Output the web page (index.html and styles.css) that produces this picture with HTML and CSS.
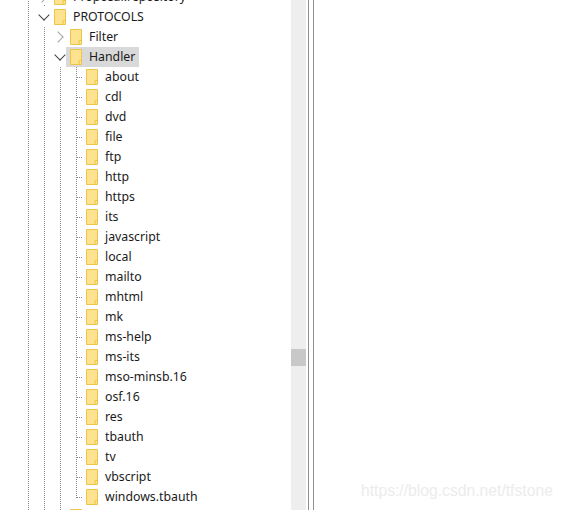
FILE: index.html
```html
<!DOCTYPE html>
<html lang="en">
    <head>
        <meta charset="UTF-8">
        <meta name="viewport" content="width=device-width, initial-scale=1.0">
        <title>regedit</title>
        <link rel="stylesheet" href="styles.css">
    </head>
    <body>
        <svg class="defs" width="0" height="0">
            <symbol id="folder" viewBox="0 0 12 16">
                <path d="M.5.5h11v15H.5z" fill="#fde38f" stroke="#eec548"/>
                <path d="M9 15.5v-4h2.5" fill="none" stroke="#eec548"/>
            </symbol>
        </svg>
        <div class="window">
            <div class="tree">
                <div class="row"><span class="cell line"></span><span class="toggle closed tail"></span><span class="item"><svg class="folder"><use href="#folder"/></svg><span>Proposal.repository</span></span></div>
                <div class="row"><span class="cell line"></span><span class="toggle open"></span><span class="item"><svg class="folder"><use href="#folder"/></svg><span>PROTOCOLS</span></span></div>
                <div class="row"><span class="cell line"></span><span class="cell line"></span><span class="toggle closed"></span><span class="item"><svg class="folder"><use href="#folder"/></svg><span>Filter</span></span></div>
                <div class="row"><span class="cell line"></span><span class="cell line"></span><span class="toggle open"></span><span class="item selected"><svg class="folder"><use href="#folder"/></svg><span>Handler</span></span></div>
                <div class="row"><span class="cell line"></span><span class="cell line"></span><span class="cell line"></span><span class="cell branch"></span><span class="item"><svg class="folder"><use href="#folder"/></svg><span>about</span></span></div>
                <div class="row"><span class="cell line"></span><span class="cell line"></span><span class="cell line"></span><span class="cell branch"></span><span class="item"><svg class="folder"><use href="#folder"/></svg><span>cdl</span></span></div>
                <div class="row"><span class="cell line"></span><span class="cell line"></span><span class="cell line"></span><span class="cell branch"></span><span class="item"><svg class="folder"><use href="#folder"/></svg><span>dvd</span></span></div>
                <div class="row"><span class="cell line"></span><span class="cell line"></span><span class="cell line"></span><span class="cell branch"></span><span class="item"><svg class="folder"><use href="#folder"/></svg><span>file</span></span></div>
                <div class="row"><span class="cell line"></span><span class="cell line"></span><span class="cell line"></span><span class="cell branch"></span><span class="item"><svg class="folder"><use href="#folder"/></svg><span>ftp</span></span></div>
                <div class="row"><span class="cell line"></span><span class="cell line"></span><span class="cell line"></span><span class="cell branch"></span><span class="item"><svg class="folder"><use href="#folder"/></svg><span>http</span></span></div>
                <div class="row"><span class="cell line"></span><span class="cell line"></span><span class="cell line"></span><span class="cell branch"></span><span class="item"><svg class="folder"><use href="#folder"/></svg><span>https</span></span></div>
                <div class="row"><span class="cell line"></span><span class="cell line"></span><span class="cell line"></span><span class="cell branch"></span><span class="item"><svg class="folder"><use href="#folder"/></svg><span>its</span></span></div>
                <div class="row"><span class="cell line"></span><span class="cell line"></span><span class="cell line"></span><span class="cell branch"></span><span class="item"><svg class="folder"><use href="#folder"/></svg><span>javascript</span></span></div>
                <div class="row"><span class="cell line"></span><span class="cell line"></span><span class="cell line"></span><span class="cell branch"></span><span class="item"><svg class="folder"><use href="#folder"/></svg><span>local</span></span></div>
                <div class="row"><span class="cell line"></span><span class="cell line"></span><span class="cell line"></span><span class="cell branch"></span><span class="item"><svg class="folder"><use href="#folder"/></svg><span>mailto</span></span></div>
                <div class="row"><span class="cell line"></span><span class="cell line"></span><span class="cell line"></span><span class="cell branch"></span><span class="item"><svg class="folder"><use href="#folder"/></svg><span>mhtml</span></span></div>
                <div class="row"><span class="cell line"></span><span class="cell line"></span><span class="cell line"></span><span class="cell branch"></span><span class="item"><svg class="folder"><use href="#folder"/></svg><span>mk</span></span></div>
                <div class="row"><span class="cell line"></span><span class="cell line"></span><span class="cell line"></span><span class="cell branch"></span><span class="item"><svg class="folder"><use href="#folder"/></svg><span>ms-help</span></span></div>
                <div class="row"><span class="cell line"></span><span class="cell line"></span><span class="cell line"></span><span class="cell branch"></span><span class="item"><svg class="folder"><use href="#folder"/></svg><span>ms-its</span></span></div>
                <div class="row"><span class="cell line"></span><span class="cell line"></span><span class="cell line"></span><span class="cell branch"></span><span class="item"><svg class="folder"><use href="#folder"/></svg><span>mso-minsb.16</span></span></div>
                <div class="row"><span class="cell line"></span><span class="cell line"></span><span class="cell line"></span><span class="cell branch"></span><span class="item"><svg class="folder"><use href="#folder"/></svg><span>osf.16</span></span></div>
                <div class="row"><span class="cell line"></span><span class="cell line"></span><span class="cell line"></span><span class="cell branch"></span><span class="item"><svg class="folder"><use href="#folder"/></svg><span>res</span></span></div>
                <div class="row"><span class="cell line"></span><span class="cell line"></span><span class="cell line"></span><span class="cell branch"></span><span class="item"><svg class="folder"><use href="#folder"/></svg><span>tbauth</span></span></div>
                <div class="row"><span class="cell line"></span><span class="cell line"></span><span class="cell line"></span><span class="cell branch"></span><span class="item"><svg class="folder"><use href="#folder"/></svg><span>tv</span></span></div>
                <div class="row"><span class="cell line"></span><span class="cell line"></span><span class="cell line"></span><span class="cell branch"></span><span class="item"><svg class="folder"><use href="#folder"/></svg><span>vbscript</span></span></div>
                <div class="row"><span class="cell line"></span><span class="cell line"></span><span class="cell line"></span><span class="cell end"></span><span class="item"><svg class="folder"><use href="#folder"/></svg><span>windows.tbauth</span></span></div>
                <div class="row"><span class="cell line"></span><span class="cell line"></span><span class="cell line"></span><span class="item"><svg class="folder"><use href="#folder"/></svg></span></div>
            </div>
            <div class="scrollbar"><div class="thumb"></div></div>
            <div class="splitter"></div>
            <div class="pane"></div>
        </div>
        <div class="watermark">https://blog.csdn.net/tfstone</div>
    </body>
</html>
```

FILE: styles.css
```css
* {
    box-sizing: border-box;
}
body {
    margin: 0;
    background: #fff;
    font-family: "Noto Sans", sans-serif;
    font-size: 12.3px;
    color: #1a1a1a;
}
.defs {
    display: block;
}
.window {
    display: flex;
    height: 510px;
    overflow: hidden;
}
.tree {
    width: 291px;
    padding-left: 20px;
    margin-top: -13px;
}
.row {
    display: flex;
    height: 20px;
    align-items: center;
}
.cell {
    width: 16px;
    height: 20px;
    flex: none;
}
.line {
    background: repeating-linear-gradient(#8a8a8a 0 1px, transparent 1px 2px) 8px 0 / 1px 100% no-repeat;
}
.branch {
    background:
        repeating-linear-gradient(#8a8a8a 0 1px, transparent 1px 2px) 8px 0 / 1px 100% no-repeat,
        repeating-linear-gradient(90deg, #8a8a8a 0 1px, transparent 1px 2px) 9px 10px / 6px 1px no-repeat;
}
.end {
    background:
        repeating-linear-gradient(#8a8a8a 0 1px, transparent 1px 2px) 8px 0 / 1px 11px no-repeat,
        repeating-linear-gradient(90deg, #8a8a8a 0 1px, transparent 1px 2px) 9px 10px / 6px 1px no-repeat;
}
.tail {
    background: repeating-linear-gradient(#8a8a8a 0 1px, transparent 1px 2px) 8px 18px / 1px 2px no-repeat;
}
.toggle {
    width: 16px;
    height: 20px;
    flex: none;
    display: flex;
    align-items: center;
    justify-content: center;
}
.toggle::before {
    content: "";
    width: 7px;
    height: 7px;
    border-right: 1.5px solid #404040;
    border-bottom: 1.5px solid #404040;
}
.toggle.open::before {
    transform: translateY(-2px) rotate(45deg);
}
.toggle.closed::before {
    border-color: #a6a6a6;
    transform: translateX(-2px) rotate(-45deg);
}
.item {
    display: flex;
    align-items: center;
    gap: 7px;
    height: 20px;
    margin-left: -2px;
    padding: 0 4px;
    white-space: nowrap;
}
.item span {
    padding-bottom: 2px;
}
.selected {
    background: #d9d9d9;
}
.folder {
    width: 12px;
    height: 16px;
    flex: none;
}
.scrollbar {
    width: 15px;
    flex: none;
    background: #eeeeee;
    padding-top: 349px;
}
.thumb {
    height: 17px;
    background: #c8c8c8;
}
.splitter {
    width: 6px;
    flex: none;
    margin-left: 2px;
    border-left: 1px solid #8f8f8f;
    border-right: 1px solid #8f8f8f;
}
.pane {
    flex: 1;
}
.watermark {
    position: absolute;
    left: 361px;
    top: 482px;
    font-family: "Liberation Sans", sans-serif;
    font-size: 15.7px;
    color: #ececec;
}
```
